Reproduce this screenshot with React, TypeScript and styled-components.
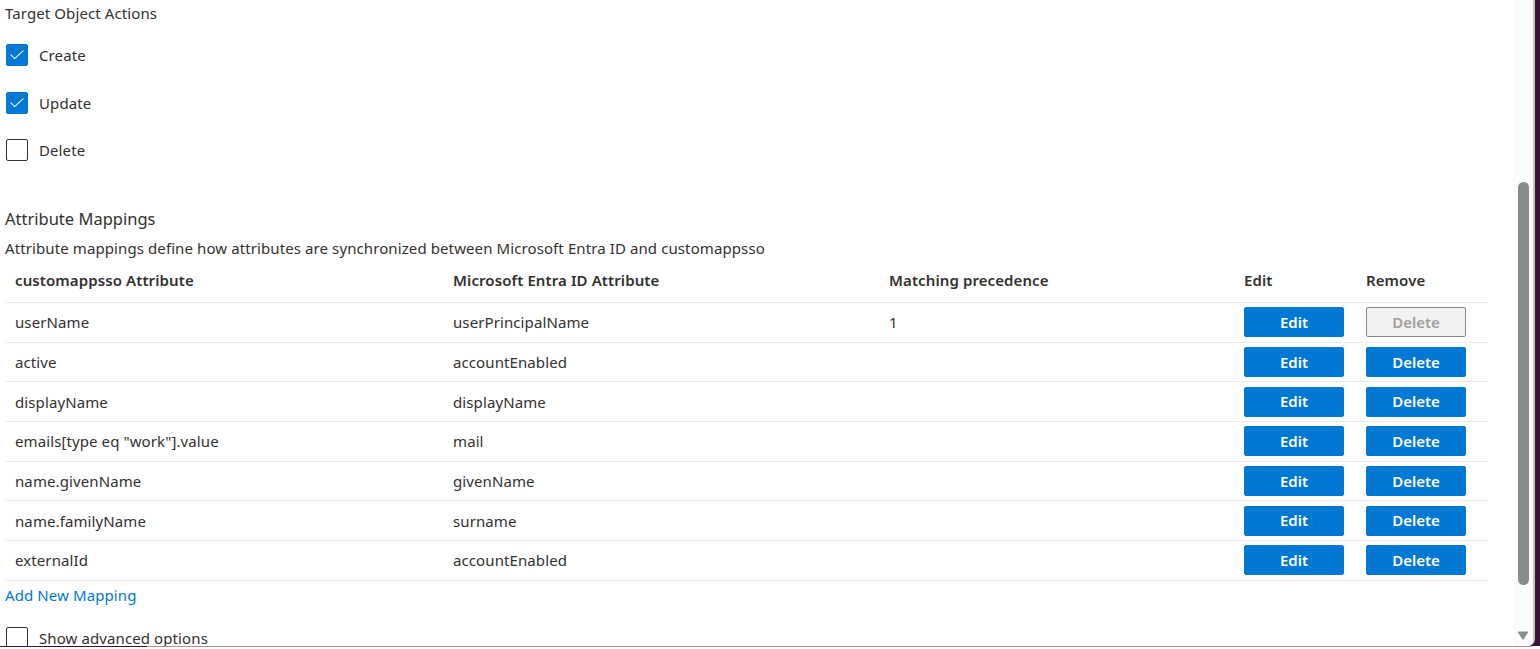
import React from 'react';
import styled, { createGlobalStyle } from 'styled-components';

const GlobalStyle = createGlobalStyle`
  html, body {
    margin: 0;
    padding: 0;
    background: #ffffff;
  }
  body {
    font-family: "Noto Sans", "Open Sans", sans-serif;
    color: #323130;
  }
`;

const Screen = styled.div`
  width: 1540px;
  height: 649px;
  display: flex;
  flex-direction: column;
  overflow: hidden;
  background: #ffffff;
`;

const Main = styled.div`
  height: 646px;
  display: flex;
  flex-direction: row;
  background: #3a1438;
`;

const Panel = styled.div`
  flex: 1;
  display: flex;
  flex-direction: row;
  background: #ffffff;
  border-right: 2px solid #c2c2c2;
  border-bottom-right-radius: 7px;
  overflow: hidden;
`;

const Content = styled.div`
  flex: 1;
  padding-left: 5px;
  overflow: hidden;
  font-size: 15px;
  line-height: 20px;
  letter-spacing: 0.1px;
`;

const ScrollTrack = styled.div`
  width: 19px;
  background: #fbfbfb;
  display: flex;
  flex-direction: column;
  align-items: center;
  padding-top: 182px;
  box-sizing: border-box;
`;

const ScrollThumb = styled.div`
  width: 11px;
  height: 403px;
  border-radius: 6px;
  background: #8b8b8b;
  margin-right: 1px;
`;

const ScrollArrow = styled.svg`
  margin-top: 46px;
  margin-right: 1px;
`;

const PurpleEdge = styled.div`
  width: 5px;
`;

const BottomEdge = styled.div`
  height: 1px;
  background: linear-gradient(to right, #3a1438 147px, #9c9c9c 147px, #9c9c9c 1532px, #ffffff 1532px);
`;

const SectionTitle = styled.div`
  margin-top: 3px;
  height: 20px;
`;

const CheckList = styled.div`
  display: flex;
  flex-direction: column;
  gap: 25.5px;
  margin-top: 21px;
`;

const CheckRow = styled.label`
  display: flex;
  align-items: center;
  gap: 11px;
  height: 22px;
  padding-left: 1px;
`;

const Box = styled.span<{ $checked?: boolean }>`
  width: 22px;
  height: 22px;
  box-sizing: border-box;
  border-radius: 2px;
  border: 1px solid ${(p) => (p.$checked ? '#0078d4' : '#323130')};
  background: ${(p) => (p.$checked ? '#0078d4' : '#ffffff')};
  display: flex;
  align-items: center;
  justify-content: center;
  flex-shrink: 0;
`;

const MappingsTitle = styled.div`
  margin-top: 47px;
  font-size: 16.5px;
  line-height: 22px;
  letter-spacing: 0;
`;

const Description = styled.div`
  margin-top: 8px;
`;

const Table = styled.div`
  width: 1483px;
  margin-top: 2px;
`;

const Row = styled.div<{ $header?: boolean }>`
  display: grid;
  grid-template-columns: 438px 436px 355px 122px 132px;
  align-items: center;
  height: ${(p) => (p.$header ? '43px' : '39.7px')};
  padding-bottom: ${(p) => (p.$header ? '2px' : '0')};
  box-sizing: border-box;
  border-bottom: 1px solid #edebe9;
  font-weight: ${(p) => (p.$header ? 600 : 400)};
`;

const Cell = styled.div`
  padding-left: 10px;
  white-space: nowrap;
`;

const ActionButton = styled.button<{ $disabled?: boolean }>`
  width: 100px;
  height: 30px;
  box-sizing: border-box;
  border-radius: 2px;
  font-family: "Noto Sans", "Open Sans", sans-serif;
  font-size: 15px;
  font-weight: 600;
  line-height: 26px;
  padding: 0 0 1px;
  cursor: ${(p) => (p.$disabled ? 'default' : 'pointer')};
  border: 1px solid ${(p) => (p.$disabled ? '#8a8886' : '#0078d4')};
  background: ${(p) => (p.$disabled ? '#f3f2f1' : '#0078d4')};
  color: ${(p) => (p.$disabled ? '#a19f9d' : '#ffffff')};
`;

const AddLink = styled.a`
  display: block;
  margin-top: 4px;
  color: #0078d4;
  text-decoration: none;
  width: max-content;
  cursor: pointer;
`;

const AdvancedRow = styled(CheckRow)`
  margin-top: 22px;
`;

interface Mapping {
  source: string;
  target: string;
  precedence?: string;
  locked?: boolean;
}

const mappings: Mapping[] = [
  { source: 'userName', target: 'userPrincipalName', precedence: '1', locked: true },
  { source: 'active', target: 'accountEnabled' },
  { source: 'displayName', target: 'displayName' },
  { source: 'emails[type eq "work"].value', target: 'mail' },
  { source: 'name.givenName', target: 'givenName' },
  { source: 'name.familyName', target: 'surname' },
  { source: 'externalId', target: 'accountEnabled' },
];

const Check = () => (
  <svg width="14" height="10" viewBox="0 0 14 10">
    <polyline points="0.6,4.6 4.6,8.6 13.4,0.6" fill="none" stroke="#ffffff" strokeWidth="1.1" />
  </svg>
);

const Checkbox: React.FC<{ checked?: boolean; label: string }> = ({ checked, label }) => (
  <CheckRow>
    <Box $checked={checked}>{checked && <Check />}</Box>
    <span>{label}</span>
  </CheckRow>
);

export default function App() {
  return (
    <Screen>
      <GlobalStyle />
      <Main>
        <Panel>
          <Content>
            <SectionTitle>Target Object Actions</SectionTitle>
            <CheckList>
              <Checkbox checked label="Create" />
              <Checkbox checked label="Update" />
              <Checkbox label="Delete" />
            </CheckList>

            <MappingsTitle>Attribute Mappings</MappingsTitle>
            <Description>
              Attribute mappings define how attributes are synchronized between Microsoft Entra ID and customappsso
            </Description>

            <Table>
              <Row $header>
                <Cell>customappsso Attribute</Cell>
                <Cell>Microsoft Entra ID Attribute</Cell>
                <Cell>Matching precedence</Cell>
                <Cell>Edit</Cell>
                <Cell>Remove</Cell>
              </Row>
              {mappings.map((m) => (
                <Row key={m.source}>
                  <Cell>{m.source}</Cell>
                  <Cell>{m.target}</Cell>
                  <Cell>{m.precedence}</Cell>
                  <Cell>
                    <ActionButton>Edit</ActionButton>
                  </Cell>
                  <Cell>
                    <ActionButton $disabled={m.locked} disabled={m.locked}>
                      Delete
                    </ActionButton>
                  </Cell>
                </Row>
              ))}
            </Table>

            <AddLink>Add New Mapping</AddLink>
            <AdvancedRow>
              <Box />
              <span>Show advanced options</span>
            </AdvancedRow>
          </Content>
          <ScrollTrack>
            <ScrollThumb />
            <ScrollArrow width="12" height="9" viewBox="0 0 12 9">
              <path d="M1 1.5 Q0.5 0.5 1.8 0.5 L10.2 0.5 Q11.5 0.5 11 1.5 L6.8 8 Q6 9 5.2 8 Z" fill="#8b8b8b" />
            </ScrollArrow>
          </ScrollTrack>
        </Panel>
        <PurpleEdge />
      </Main>
      <BottomEdge />
    </Screen>
  );
}
